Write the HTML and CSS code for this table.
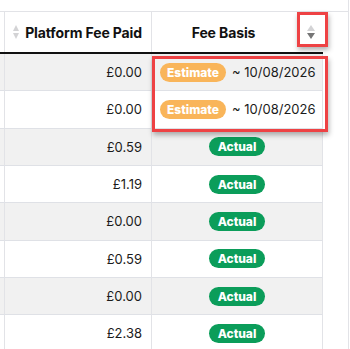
FILE: index.html
```html
<!DOCTYPE html>
<html lang="en">
<head>
    <meta charset="UTF-8">
    <meta name="viewport" content="width=device-width, initial-scale=1.0">
    <title>Platform Fees</title>
    <link rel="stylesheet" href="styles.css">
</head>
<body>

    <div class="grid">
        <div class="grid-header">
            <div class="cell cut"></div>
            <div class="cell head head-fee">
                <span class="sort sort-left">
                    <span class="tri up"></span>
                    <span class="tri down"></span>
                </span>
                <span class="head-title">Platform Fee Paid</span>
            </div>
            <div class="cell head head-basis">
                <span class="head-title center">Fee Basis</span>
                <span class="sort sort-right">
                    <span class="tri up"></span>
                    <span class="tri down dark"></span>
                </span>
            </div>
        </div>

        <div class="grid-body">
            <div class="row odd">
                <div class="cell cut"></div>
                <div class="cell amount">£0.00</div>
                <div class="cell basis left"><span class="pill estimate">Estimate</span><span class="date">~ 10/08/2026</span></div>
                <div class="gutter"></div>
            </div>
            <div class="row">
                <div class="cell cut"></div>
                <div class="cell amount">£0.00</div>
                <div class="cell basis left"><span class="pill estimate">Estimate</span><span class="date">~ 10/08/2026</span></div>
                <div class="gutter"></div>
            </div>
            <div class="row odd">
                <div class="cell cut"></div>
                <div class="cell amount">£0.59</div>
                <div class="cell basis"><span class="pill actual">Actual</span></div>
                <div class="gutter"></div>
            </div>
            <div class="row">
                <div class="cell cut"></div>
                <div class="cell amount">£1.19</div>
                <div class="cell basis"><span class="pill actual">Actual</span></div>
                <div class="gutter"></div>
            </div>
            <div class="row odd">
                <div class="cell cut"></div>
                <div class="cell amount">£0.00</div>
                <div class="cell basis"><span class="pill actual">Actual</span></div>
                <div class="gutter"></div>
            </div>
            <div class="row">
                <div class="cell cut"></div>
                <div class="cell amount">£0.59</div>
                <div class="cell basis"><span class="pill actual">Actual</span></div>
                <div class="gutter"></div>
            </div>
            <div class="row odd">
                <div class="cell cut"></div>
                <div class="cell amount">£0.00</div>
                <div class="cell basis"><span class="pill actual">Actual</span></div>
                <div class="gutter"></div>
            </div>
            <div class="row">
                <div class="cell cut"></div>
                <div class="cell amount">£2.38</div>
                <div class="cell basis"><span class="pill actual">Actual</span></div>
                <div class="gutter"></div>
            </div>
        </div>

        <!-- annotation boxes -->
        <div class="mark mark-sort"></div>
        <div class="mark mark-rows"></div>
    </div>

</body>
</html>
```

FILE: styles.css
```css
* {
    margin: 0;
    padding: 0;
    box-sizing: border-box;
}

body {
    font-family: 'Inter', 'Liberation Sans', sans-serif;
    background: #fff;
    color: #1b1b1b;
    width: 350px;
    height: 349px;
    overflow: hidden;
}

.grid {
    position: relative;
    padding-top: 11px;
    width: 349px;
    border-right: 1px solid #e2e3e7;
    height: 349px;
}

/* Header */
.grid-header {
    display: grid;
    grid-template-columns: 5px 147px 1fr;
    height: 43px;
    border-top: 1px solid #e2e3e7;
    position: relative;
}

.grid-header::after {
    content: "";
    position: absolute;
    left: 0;
    bottom: 0;
    width: 323px;
    height: 2px;
    background: #111;
}

.cut {
    border-right: 1px solid #e2e3e7;
}

.head {
    display: flex;
    align-items: center;
    font-weight: 700;
    font-size: 14px;
    letter-spacing: -0.12px;
    color: #111;
    padding-bottom: 2px;
}

.head-fee {
    border-right: 1px solid #e2e3e7;
    justify-content: flex-end;
    padding-right: 9px;
}

.head-basis {
    padding-left: 6px;
}

.head-title.center {
    flex: 1;
    text-align: center;
}

.sort {
    display: flex;
    flex-direction: column;
    align-items: center;
    gap: 2px;
}

.sort-left {
    margin-right: 6px;
}

.sort-left .tri {
    border-left-width: 3.5px;
    border-right-width: 3.5px;
}

.sort-right {
    width: 9px;
    margin-left: 17px;
    margin-right: 33px;
}

.tri {
    width: 0;
    height: 0;
    border-left: 4px solid transparent;
    border-right: 4px solid transparent;
}

.tri.up {
    border-bottom: 6px solid #d3d3d5;
}

.tri.down {
    border-top: 6px solid #d3d3d5;
}

.tri.down.dark {
    border-top-color: #767676;
}

/* Body */
.row {
    display: grid;
    grid-template-columns: 5px 147px 171px 1fr;
    height: 37.33px;
    font-size: 13px;
}

.row .cell {
    border-bottom: 1px solid #dfe1e6;
}

.row.odd .cell {
    background: #f1f1f1;
}

.cell.amount {
    display: flex;
    align-items: center;
    justify-content: flex-end;
    padding-right: 9px;
    border-right: 1px solid #e2e3e7;
}

.cell.basis {
    display: flex;
    align-items: center;
    justify-content: center;
    border-right: 1px solid #e2e3e7;
}

.cell.basis.left {
    justify-content: flex-start;
    padding-left: 8px;
}

.pill {
    display: inline-flex;
    align-items: center;
    height: 19px;
    border-radius: 10px;
    padding: 0 7px;
    color: #fff;
    font-weight: 800;
    font-size: 12px;
}

.pill.estimate {
    background: #f9b55a;
}

.pill.actual {
    background: #0b9d5a;
    padding: 0 9px;
}

.date {
    margin-left: 6px;
}

/* Annotation boxes */
.mark {
    position: absolute;
    border: 3px solid #ee4244;
    box-shadow: 1px 3px 5px rgba(0, 0, 0, 0.3);
}

.mark-sort {
    left: 297px;
    top: 12px;
    width: 31px;
    height: 35px;
}

.mark-rows {
    left: 152px;
    top: 56px;
    width: 176px;
    height: 76px;
}
```
